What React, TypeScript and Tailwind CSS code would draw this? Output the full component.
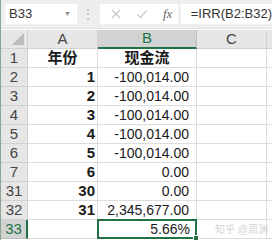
import React from 'react';

const rows: { n: string; a: string; b: string; head?: boolean }[] = [
  { n: '1', a: '年份', b: '现金流', head: true },
  { n: '2', a: '1', b: '-100,014.00' },
  { n: '3', a: '2', b: '-100,014.00' },
  { n: '4', a: '3', b: '-100,014.00' },
  { n: '5', a: '4', b: '-100,014.00' },
  { n: '6', a: '5', b: '-100,014.00' },
  { n: '7', a: '6', b: '0.00' },
  { n: '31', a: '30', b: '0.00' },
  { n: '32', a: '31', b: '2,345,677.00' },
];

const font = { fontFamily: '"Liberation Sans", "Noto Sans CJK SC", sans-serif' };

export default function App() {
  return (
    <div className="w-[272px] h-[240px] overflow-hidden bg-white border-l border-[#8aa596] text-[#1a1a1a]" style={font}>
      {/* Formula bar */}
      <div className="h-[29px] bg-[#eeeeee] flex items-center pl-1 border-b border-[#e2e2e2]">
        <div className="w-[77px] h-[20px] bg-white flex items-center justify-between px-[4px] text-[13px] text-[#333]">
          <span>B33</span>
          <span className="text-[7px] text-[#888] mr-[2px]">▼</span>
        </div>
        <div className="w-[25px] flex justify-center text-[#b5b5b5] text-[12px]">⋮</div>
        <div className="w-[84px] h-[20px] bg-white flex items-center">
          <svg width="12" height="12" viewBox="0 0 12 12" className="ml-[10px]">
            <path d="M2 2 L10 10 M10 2 L2 10" stroke="#c8c8c8" strokeWidth="1.2" />
          </svg>
          <svg width="12" height="12" viewBox="0 0 12 12" className="ml-[14px]">
            <path d="M1.5 6.5 L4.5 9.5 L10.5 2.5" stroke="#c8c8c8" strokeWidth="1.2" fill="none" />
          </svg>
          <span className="ml-[15px] italic text-[13px] text-[#666]" style={{ fontFamily: '"Liberation Serif", serif' }}>fx</span>
        </div>
        <div className="ml-[3px] flex-1 h-[20px] bg-white flex items-center pl-[10px] text-[13px] text-[#333] whitespace-nowrap">
          =IRR(B2:B32)
        </div>
      </div>

      {/* Sheet */}
      <div className="mt-[1px] grid grid-cols-[27px_70px_99px_70px_1fr] auto-rows-[19px] text-[14px]">
        {/* column headers */}
        <div className="bg-[#e6e6e6] border-r border-b border-[#d0d0d0] relative">
          <div className="absolute right-[3px] bottom-[3px] w-0 h-0 border-l-[12px] border-l-transparent border-b-[12px] border-b-[#bcbcbc]" />
        </div>
        <div className="bg-[#e6e6e6] border-r border-b border-[#d0d0d0] flex items-center justify-center text-[15px] text-[#444]">A</div>
        <div className="bg-[#d2d2d2] border-r border-[#bdbdbd] border-b-2 border-b-[#217346] flex items-center justify-center text-[15px] text-[#217346]">B</div>
        <div className="bg-[#e6e6e6] border-r border-b border-[#d0d0d0] flex items-center justify-center text-[15px] text-[#444]">C</div>
        <div className="bg-[#e6e6e6] border-b border-[#d0d0d0]" />

        {rows.map((r) => (
          <React.Fragment key={r.n}>
            <div className="bg-[#e6e6e6] border-r border-b border-[#d0d0d0] flex items-center justify-center text-[15px] text-[#444]">{r.n}</div>
            <div className={`border-r border-b border-[#dcdcdc] flex items-center font-bold text-[15px] ${r.head ? 'justify-center' : 'justify-end pr-[2px]'}`}>{r.a}</div>
            <div className={`border-r border-b border-[#dcdcdc] flex items-center ${r.head ? 'justify-center font-bold text-[15px]' : 'justify-end pr-[7px]'}`}>{r.b}</div>
            <div className="border-r border-b border-[#dcdcdc]" />
            <div className="border-b border-[#dcdcdc]" />
          </React.Fragment>
        ))}

        {/* row 33 */}
        <div className="bg-[#d2d2d2] border-r-2 border-r-[#217346] border-b border-[#bdbdbd] flex items-center justify-center text-[15px] text-[#217346]">33</div>
        <div className="border-r border-b border-[#dcdcdc]" />
        <div className="border-2 border-[#217346] flex items-center justify-end pr-[5px] relative -mt-[1px] -ml-[1px]">
          5.66%
          <div className="absolute -right-[4px] -bottom-[4px] w-[6px] h-[6px] bg-[#217346] border border-white" />
        </div>
        <div className="border-r border-b border-[#dcdcdc] flex items-center justify-end pr-[2px] text-[10px] text-[#d4d4d4] whitespace-nowrap">
          <span className="-mr-[4px]">知乎 @周渊</span>
        </div>
        <div className="border-b border-[#dcdcdc]" />
      </div>
    </div>
  );
}
